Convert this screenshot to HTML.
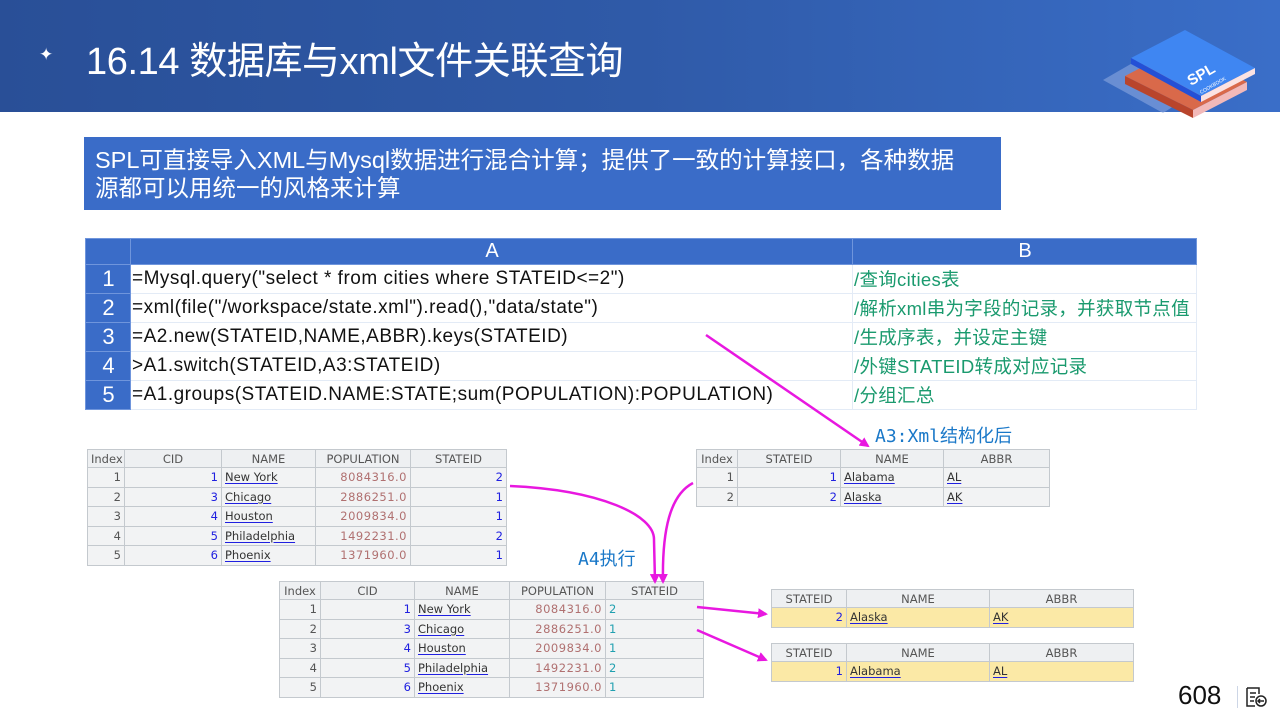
<!DOCTYPE html>
<html><head><meta charset="utf-8"><style>
*{margin:0;padding:0;box-sizing:border-box}
body{width:1280px;height:720px;background:#fff;position:relative;overflow:hidden;font-family:"Liberation Sans","Noto Sans CJK SC",sans-serif}
.hdr{position:absolute;left:0;top:0;width:1280px;height:112px;background:linear-gradient(90deg,#294f97 0%,#2f5aa8 50%,#3a6ec8 100%)}
.title{position:absolute;left:86px;top:30px;color:#fff;font-size:38px;white-space:nowrap;letter-spacing:-0.4px}
.star{position:absolute;left:39px;top:45px;color:#fff;font-size:17px}
.box{position:absolute;left:84px;top:137px;width:917px;height:73px;background:#3a6cc8;color:#fff;font-size:23.5px;line-height:28px;padding:9px 0 0 11px;white-space:nowrap}
.grid{position:absolute;left:85px;top:238px;border-collapse:collapse;table-layout:fixed;font-size:19px}
.grid td{height:29px;border:1px solid #e3ebf6;padding:0 0 0 1px;white-space:nowrap;color:#111;overflow:hidden;letter-spacing:0.5px}
.grid tr.h td{background:#3a6cc8;color:#fff;text-align:center;height:26px;border-color:#6f95dc;letter-spacing:0}
.grid td.n{background:#3a6cc8;color:#fff;text-align:center;font-size:22px;border-color:#6f95dc;letter-spacing:0}
.grid td.c{color:#1a9a6e;letter-spacing:0.3px;font-size:18.5px}
.t{position:absolute;border-collapse:collapse;table-layout:fixed;font-size:12px;background:#f2f3f4;font-family:"DejaVu Sans",sans-serif}
.t td{border:1px solid #c4c9ce;height:19.5px;padding:0 3px;white-space:nowrap;color:#555;overflow:hidden;font-size:11.5px}
.t tr.h td{text-align:center;color:#555;height:18px;background:#eef0f2}
.r{text-align:right}.b{color:#2020e0!important}.p{color:#b07070!important;letter-spacing:0.5px}.tl{color:#20a0b0!important}
.u{color:#333;text-decoration:underline;text-decoration-color:#2020e0;text-underline-offset:2px}
.y td{background:#fbe9a6}
.lab{position:absolute;color:#1a78c8;font-size:18px;font-family:"DejaVu Sans Mono","Noto Sans CJK SC",monospace}
</style></head><body>
<div class="hdr"></div>
<div class="star">✦</div>
<div class="title">16.14 数据库与xml文件关联查询</div>
<svg style="position:absolute;left:1095px;top:18px" width="170" height="105" viewBox="0 0 170 105">
<polygon points="8,62 60,32 120,62 68,95" fill="#8aa6e0" opacity="0.6"/>
<polygon points="30,58 84,30 152,64 98,92" fill="#d9694a"/>
<polygon points="30,58 98,92 98,100 30,66" fill="#b9452c"/>
<polygon points="98,92 152,64 152,72 98,100" fill="#f2b9b9"/>
<polygon points="36,40 90,12 160,50 106,78" fill="#3f86f2"/>
<polygon points="36,40 106,78 106,84 36,46" fill="#2450d6"/>
<polygon points="106,78 160,50 160,56 106,84" fill="#fbe2e2"/>
<text x="96" y="68" fill="#fff" font-size="15" font-weight="bold" transform="rotate(-30 96 68)" font-family="Liberation Sans">SPL</text>
<text x="106" y="76" fill="#fff" font-size="5" transform="rotate(-30 106 76)" font-family="Liberation Sans">COOKBOOK</text>
</svg>
<div class="box">SPL可直接导入XML与Mysql数据进行混合计算；提供了一致的计算接口，各种数据<br>源都可以用统一的风格来计算</div>
<table class="grid">
<colgroup><col style="width:45px"><col style="width:722px"><col style="width:344px"></colgroup>
<tr class="h"><td></td><td style="font-size:20px">A</td><td style="font-size:20px">B</td></tr>
<tr><td class="n">1</td><td>=Mysql.query("select * from cities where STATEID&lt;=2")</td><td class="c">/查询cities表</td></tr>
<tr><td class="n">2</td><td>=xml(file("/workspace/state.xml").read(),"data/state")</td><td class="c">/解析xml串为字段的记录，并获取节点值</td></tr>
<tr><td class="n">3</td><td>=A2.new(STATEID,NAME,ABBR).keys(STATEID)</td><td class="c">/生成序表，并设定主键</td></tr>
<tr><td class="n">4</td><td>&gt;A1.switch(STATEID,A3:STATEID)</td><td class="c">/外键STATEID转成对应记录</td></tr>
<tr><td class="n">5</td><td>=A1.groups(STATEID.NAME:STATE;sum(POPULATION):POPULATION)</td><td class="c">/分组汇总</td></tr>
</table>

<table class="t" style="left:87px;top:449px;width:419px">
<colgroup><col style="width:37px"><col style="width:97px"><col style="width:94px"><col style="width:95px"><col style="width:96px"></colgroup>
<tr class="h"><td>Index</td><td>CID</td><td>NAME</td><td>POPULATION</td><td>STATEID</td></tr>
<tr><td class="r">1</td><td class="r b">1</td><td><span class="u">New York</span></td><td class="r p">8084316.0</td><td class="r b">2</td></tr>
<tr><td class="r">2</td><td class="r b">3</td><td><span class="u">Chicago</span></td><td class="r p">2886251.0</td><td class="r b">1</td></tr>
<tr><td class="r">3</td><td class="r b">4</td><td><span class="u">Houston</span></td><td class="r p">2009834.0</td><td class="r b">1</td></tr>
<tr><td class="r">4</td><td class="r b">5</td><td><span class="u">Philadelphia</span></td><td class="r p">1492231.0</td><td class="r b">2</td></tr>
<tr><td class="r">5</td><td class="r b">6</td><td><span class="u">Phoenix</span></td><td class="r p">1371960.0</td><td class="r b">1</td></tr>
</table>

<div class="lab" style="left:875px;top:422px">A3:Xml结构化后</div>
<table class="t" style="left:696px;top:449px;width:353px">
<colgroup><col style="width:41px"><col style="width:103px"><col style="width:103px"><col style="width:106px"></colgroup>
<tr class="h"><td>Index</td><td>STATEID</td><td>NAME</td><td>ABBR</td></tr>
<tr><td class="r">1</td><td class="r b">1</td><td><span class="u">Alabama</span></td><td><span class="u">AL</span></td></tr>
<tr><td class="r">2</td><td class="r b">2</td><td><span class="u">Alaska</span></td><td><span class="u">AK</span></td></tr>
</table>

<div class="lab" style="left:578px;top:545px">A4执行</div>
<table class="t" style="left:279px;top:581px;width:424px">
<colgroup><col style="width:41px"><col style="width:94px"><col style="width:95px"><col style="width:96px"><col style="width:98px"></colgroup>
<tr class="h"><td>Index</td><td>CID</td><td>NAME</td><td>POPULATION</td><td>STATEID</td></tr>
<tr><td class="r">1</td><td class="r b">1</td><td><span class="u">New York</span></td><td class="r p">8084316.0</td><td class="tl">2</td></tr>
<tr><td class="r">2</td><td class="r b">3</td><td><span class="u">Chicago</span></td><td class="r p">2886251.0</td><td class="tl">1</td></tr>
<tr><td class="r">3</td><td class="r b">4</td><td><span class="u">Houston</span></td><td class="r p">2009834.0</td><td class="tl">1</td></tr>
<tr><td class="r">4</td><td class="r b">5</td><td><span class="u">Philadelphia</span></td><td class="r p">1492231.0</td><td class="tl">2</td></tr>
<tr><td class="r">5</td><td class="r b">6</td><td><span class="u">Phoenix</span></td><td class="r p">1371960.0</td><td class="tl">1</td></tr>
</table>

<table class="t" style="left:771px;top:589px;width:362px">
<colgroup><col style="width:75px"><col style="width:143px"><col style="width:144px"></colgroup>
<tr class="h"><td>STATEID</td><td>NAME</td><td>ABBR</td></tr>
<tr class="y"><td class="r b">2</td><td><span class="u">Alaska</span></td><td><span class="u">AK</span></td></tr>
</table>
<table class="t" style="left:771px;top:643px;width:362px">
<colgroup><col style="width:75px"><col style="width:143px"><col style="width:144px"></colgroup>
<tr class="h"><td>STATEID</td><td>NAME</td><td>ABBR</td></tr>
<tr class="y"><td class="r b">1</td><td><span class="u">Alabama</span></td><td><span class="u">AL</span></td></tr>
</table>

<svg style="position:absolute;left:0;top:0" width="1280" height="720">
<defs><marker id="a" markerWidth="10" markerHeight="10" refX="8" refY="5" orient="auto" markerUnits="userSpaceOnUse"><path d="M0,0 L10,5 L0,10 z" fill="#e818e0"/></marker></defs>
<g stroke="#e818e0" stroke-width="2.5" fill="none">
<path d="M706,335 L868,446" marker-end="url(#a)"/>
<path d="M510,486 C600,490 655,515 654,540 L655,582" marker-end="url(#a)"/>
<path d="M693,483 C670,495 662,530 663,582" marker-end="url(#a)"/>
<path d="M697,607 L766,614" marker-end="url(#a)"/>
<path d="M697,630 L766,660" marker-end="url(#a)"/>
</g>
</svg>
<div style="position:absolute;left:1178px;top:680px;font-size:26px;color:#111">608</div>
<div style="position:absolute;left:1237px;top:686px;width:1px;height:22px;background:#cdd6e6"></div>
<svg style="position:absolute;left:1245px;top:686px" width="24" height="22" viewBox="0 0 24 22"><g stroke="#222" stroke-width="1.5" fill="none"><path d="M2,2 H14 V8 M2,2 V20 H10"/><path d="M5,7 H11 M5,11 H10 M5,15 H9"/><circle cx="16" cy="15" r="5"/><path d="M19,15 H13 M15,13 L13,15 L15,17"/></g></svg>
</body></html>
